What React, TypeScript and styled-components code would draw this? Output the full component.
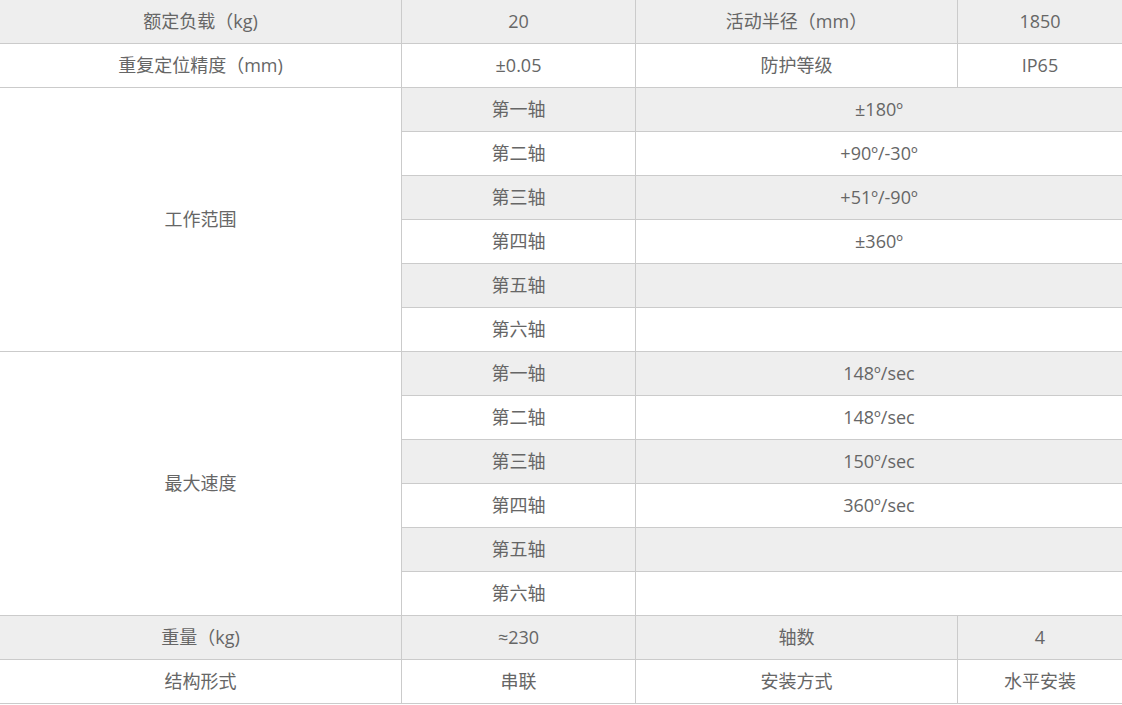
import React from "react";
import styled, { createGlobalStyle } from "styled-components";

const Global = createGlobalStyle`
  html, body { margin: 0; padding: 0; background: #fff; }
  body { font-family: "Open Sans", "Noto Sans CJK SC", sans-serif; }
`;

const Grid = styled.div`
  display: grid;
  grid-template-columns: 402px 234px 322px 164px;
  grid-auto-rows: 44px;
  width: 1122px;
`;

const Cell = styled.div<{ $gray?: boolean; $span?: number; $cols?: number; $last?: boolean }>`
  box-sizing: border-box;
  display: flex;
  align-items: center;
  justify-content: center;
  padding-bottom: 2px;
  background: ${(p) => (p.$gray ? "#eeeeee" : "#ffffff")};
  border-bottom: 1px solid #cbcbcb;
  border-right: ${(p) => (p.$last ? "none" : "1px solid #cbcbcb")};
  grid-row: ${(p) => (p.$span ? `span ${p.$span}` : "auto")};
  grid-column: ${(p) => (p.$cols ? `span ${p.$cols}` : "auto")};
  color: #666666;
  font-family: "Open Sans", "Noto Sans CJK SC", sans-serif;
  font-size: 18px;
  line-height: 24px;
  white-space: nowrap;
`;

const axes = ["第一轴", "第二轴", "第三轴", "第四轴", "第五轴", "第六轴"];
const ranges = ["±180º", "+90º/-30º", "+51º/-90º", "±360º", "", ""];
const speeds = ["148º/sec", "148º/sec", "150º/sec", "360º/sec", "", ""];

function AxisGroup({ title, values, startGray }: { title: string; values: string[]; startGray: boolean }) {
  return (
    <>
      <Cell $span={6}>{title}</Cell>
      {axes.map((a, i) => {
        const gray = (i % 2 === 0) === startGray;
        return (
          <React.Fragment key={a}>
            <Cell $gray={gray}>{a}</Cell>
            <Cell $gray={gray} $cols={2} $last>
              {values[i]}
            </Cell>
          </React.Fragment>
        );
      })}
    </>
  );
}

function QuadRow({ items, gray }: { items: string[]; gray: boolean }) {
  return (
    <>
      {items.map((t, i) => (
        <Cell key={i} $gray={gray} $last={i === 3}>
          {t}
        </Cell>
      ))}
    </>
  );
}

export default function App() {
  return (
    <>
      <Global />
      <Grid>
        <QuadRow gray items={["额定负载（kg)", "20", "活动半径（mm）", "1850"]} />
        <QuadRow gray={false} items={["重复定位精度（mm)", "±0.05", "防护等级", "IP65"]} />
        <AxisGroup title="工作范围" values={ranges} startGray />
        <AxisGroup title="最大速度" values={speeds} startGray />
        <QuadRow gray items={["重量（kg)", "≈230", "轴数", "4"]} />
        <QuadRow gray={false} items={["结构形式", "串联", "安装方式", "水平安装"]} />
      </Grid>
    </>
  );
}
